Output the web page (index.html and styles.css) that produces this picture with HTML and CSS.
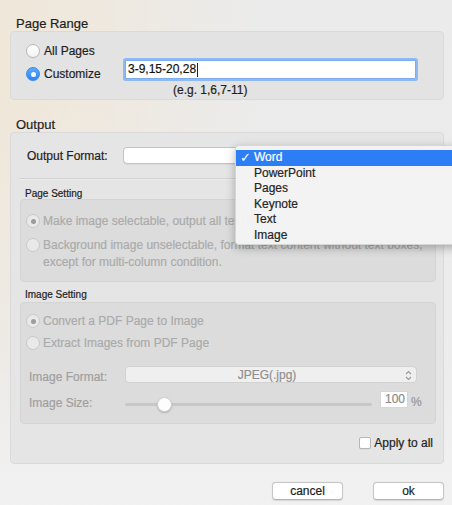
FILE: index.html
```html
<!DOCTYPE html>
<html>
<head>
<meta charset="utf-8">
<link rel="stylesheet" href="styles.css">
</head>
<body>
<div class="win">
  <div class="title">Page Range</div>
  <div class="box range">
    <div class="r1"><span class="radio"></span><span class="txt">All Pages</span></div>
    <div class="r2">
      <div class="lbl"><span class="radio on"></span><span class="txt">Customize</span></div>
      <div class="field">3-9,15-20,28<span class="caret"></span></div>
    </div>
    <div class="hint">(e.g. 1,6,7-11)</div>
  </div>

  <div class="title out">Output</div>
  <div class="box output">
    <div class="fmt"><span class="flabel">Output Format:</span><div class="popup"></div></div>
    <div class="sep"></div>
    <div class="sub">Page Setting</div>
    <div class="inner ps">
      <div class="opt"><span class="radio dis on"></span><span class="dtxt">Make image selectable, output all text boxes</span></div>
      <div class="opt two"><span class="radio dis"></span><span class="dtxt">Background image unselectable, format text content without text boxes,<br>except for multi-column condition.</span></div>
    </div>
    <div class="sub">Image Setting</div>
    <div class="inner is">
      <div class="opt"><span class="radio dis on"></span><span class="dtxt">Convert a PDF Page to Image</span></div>
      <div class="opt o2"><span class="radio dis"></span><span class="dtxt">Extract Images from PDF Page</span></div>
      <div class="frow"><span class="ilabel">Image Format:</span>
        <div class="dpopup"><span class="dval">JPEG(.jpg)</span>
          <svg class="arrows" width="7" height="11" viewBox="0 0 7 11"><path d="M1 4 L3.5 1.5 L6 4 M1 7 L3.5 9.5 L6 7" fill="none" stroke="#9a9a9a" stroke-width="1.1"/></svg>
        </div>
      </div>
      <div class="srow"><span class="ilabel">Image Size:</span>
        <div class="slider"><div class="track"></div><div class="knob"></div></div>
        <div class="num">100</div><span class="pct">%</span>
      </div>
    </div>
    <div class="apply"><span class="check"></span><span class="txt">Apply to all</span></div>
  </div>

  <div class="buttons"><div class="btn">cancel</div><div class="btn">ok</div></div>

  <div class="menu">
    <div class="item sel"><span class="tick">✓</span>Word</div>
    <div class="item">PowerPoint</div>
    <div class="item">Pages</div>
    <div class="item">Keynote</div>
    <div class="item">Text</div>
    <div class="item">Image</div>
  </div>
</div>
</body>
</html>
```
FILE: styles.css
```css
* { box-sizing: border-box; }
html, body { margin: 0; padding: 0; }
body {
  font-family: "Liberation Sans", Arial, sans-serif;
  font-size: 12px;
  color: #222;
  -webkit-text-stroke: 0.2px currentColor;
}
.win {
  position: relative;
  width: 452px;
  height: 505px;
  overflow: hidden;
  padding-top: 16px;
  background:
    radial-gradient(ellipse 260px 420px at 0px 60px, rgba(241,230,212,0.85), rgba(241,230,212,0) 100%),
    linear-gradient(to bottom, #ebebeb 0%, #ececec 70%, #f0f0f0 92%, #f1f1f1 100%);
}
.title {
  height: 15px;
  line-height: 15px;
  font-size: 13px;
  padding-left: 16px;
  color: #1e1e1e;
}
.title.out { margin-top: 17px; }
.box {
  margin-left: 10px;
  width: 434px;
  border: 1px solid #dadada;
  border-radius: 4px;
}
.range {
  height: 69px;
  background: #e3e3e3;
  padding: 9px 0 0 15px;
}
.r1 { display: flex; align-items: center; height: 20px; }
.r2 { display: flex; align-items: flex-start; margin-top: -3px; }
.lbl { display: flex; align-items: center; width: 99px; height: 20px; margin-top: 6px; }
.txt { margin-left: 4px; color: #1f1f1f; }
.radio {
  width: 14px; height: 14px;
  border-radius: 50%;
  flex: none;
  background: linear-gradient(#ffffff, #f3f3f3);
  border: 1px solid #b9b9b9;
  box-shadow: 0 0.5px 0.5px rgba(0,0,0,0.08);
  position: relative;
}
.radio.on {
  background: linear-gradient(#5aaaff, #2b86f5);
  border-color: #3a8be6;
}
.radio.on::after {
  content: "";
  position: absolute;
  left: 3.5px; top: 3.5px;
  width: 5px; height: 5px;
  border-radius: 50%;
  background: #fff;
}
.radio.dis {
  background: #e9e9e9;
  border-color: #c9c9c9;
  box-shadow: none;
}
.radio.dis.on::after {
  background: #9c9c9c;
  left: 3.5px; top: 3.5px;
}
.field {
  margin-top: 2px;
  width: 291px; height: 19px;
  background: #fff;
  border: 1px solid #7cabef;
  box-shadow: 0 0 0 2px #8fb9f3;
  border-radius: 1px;
  line-height: 17px;
  padding-left: 2px;
  color: #111;
  display: flex;
  align-items: center;
}
.caret { display: inline-block; width: 1px; height: 14px; background: #222; margin-left: 1px; }
.hint {
  padding-left: 147px;
  height: 12px;
  line-height: 12px;
  color: #1f1f1f;
}
.output {
  height: 332px;
  background: #e5e5e5;
  padding: 14px 7px 0 9px;
}
.fmt { display: flex; align-items: center; height: 17px; padding-left: 7px; }
.flabel { width: 96px; color: #1f1f1f; }
.popup {
  width: 295px; height: 17px;
  background: #fff;
  border: 1px solid #c4c4c4;
  border-radius: 4px;
  box-shadow: 0 0.5px 0.5px rgba(0,0,0,0.1);
}
.sep {
  margin-top: 14px;
  height: 2px;
  border-top: 1px solid #d2d2d2;
  border-bottom: 1px solid #ececec;
}
.sub {
  margin-top: 8px;
  height: 11px;
  line-height: 11px;
  font-size: 10px;
  padding-left: 5px;
  color: #1e1e1e;
}
.inner {
  width: 416px;
  background: #dcdcdc;
  border: 1px solid #d4d4d4;
  border-radius: 4px;
}
.ps { height: 83px; padding: 11px 0 0 5px; }
.is { height: 122px; padding: 8px 0 0 5px; margin-top: 2px; }
.ps + .sub { margin-top: 7px; }
.opt { display: flex; align-items: center; height: 20px; }
.opt.o2 { margin-top: 2px; }
.opt.two { margin-top: 6px; align-items: flex-start; height: 33px; }
.opt.two .radio { margin-top: 1px; }
.dtxt { margin-left: 3px; color: #ababab; white-space: nowrap; }
.opt.two .dtxt { line-height: 16.5px; }
.frow { display: flex; align-items: center; height: 17px; margin-top: 13px; padding-left: 3px; }
.ilabel { width: 96px; color: #a0a0a0; flex: none; }
.frow .ilabel { margin-top: 4px; }
.srow .ilabel { margin-top: 6px; }
.dpopup {
  width: 292px; height: 17px;
  background: #efefef;
  border: 1px solid #d2d2d2;
  border-radius: 4px;
  position: relative;
  display: flex; align-items: center; justify-content: center;
}
.dval { color: #8f8f8f; margin-left: -8px; }
.arrows { position: absolute; right: 4px; top: 2.5px; }
.srow { display: flex; align-items: center; height: 17px; margin-top: 8px; padding-left: 3px; }
.slider { position: relative; width: 247px; height: 17px; margin-top: 12px; }
.track { position: absolute; left: 0; right: 0; top: 6px; height: 3px; border-radius: 2px; background: #c8c8c8; }
.knob {
  position: absolute; left: 32px; top: 0px;
  width: 15px; height: 15px; border-radius: 50%;
  background: #fdfdfd;
  border: 0.5px solid #cfcfcf;
  box-shadow: 0 1px 1.5px rgba(0,0,0,0.22);
}
.num {
  margin-left: 8px;
  width: 28px; height: 17px;
  background: #fff;
  border: 1px solid #d6d6d6;
  text-align: right;
  padding-right: 2px;
  line-height: 15px;
  color: #8a8a8a;
  font-size: 12px;
}
.pct { margin-left: 3px; color: #999; margin-top: 4px; }
.apply {
  display: flex; align-items: center; justify-content: flex-end;
  height: 20px; margin-top: 9px; padding-right: 3px;
}
.check {
  width: 12px; height: 12px;
  background: #fff;
  border: 1px solid #b7b7b7;
  border-radius: 2px;
  box-shadow: 0 0.5px 0.5px rgba(0,0,0,0.1);
}
.apply .txt { margin-left: 3px; }
.buttons {
  display: flex; justify-content: flex-end; gap: 30px;
  margin-top: 18px; padding-right: 8px;
}
.btn {
  width: 71px; height: 18px;
  background: #fff;
  border: 1px solid #c6c6c6;
  border-bottom-color: #b5b5b5;
  border-radius: 4px;
  box-shadow: 0 0.5px 1px rgba(0,0,0,0.12);
  text-align: center;
  line-height: 16px;
  color: #1b1b1b;
}
.menu {
  position: absolute;
  left: 235px; top: 145px;
  width: 240px; height: 100px;
  background: rgba(243,243,243,0.98);
  border: 0.5px solid rgba(0,0,0,0.12);
  border-radius: 4px;
  box-shadow: 0 3px 10px rgba(0,0,0,0.28);
  padding-top: 4px;
}
.item {
  height: 15.5px;
  line-height: 15.5px;
  padding-left: 18px;
  color: #252525;
  position: relative;
}
.item.sel { background: #2d7ef5; color: #fff; }
.tick {
  position: absolute; left: 4px; top: 0;
  font-family: "DejaVu Sans", sans-serif;
  font-size: 13px;
  font-weight: bold;
  -webkit-text-stroke: 0;
}
```
